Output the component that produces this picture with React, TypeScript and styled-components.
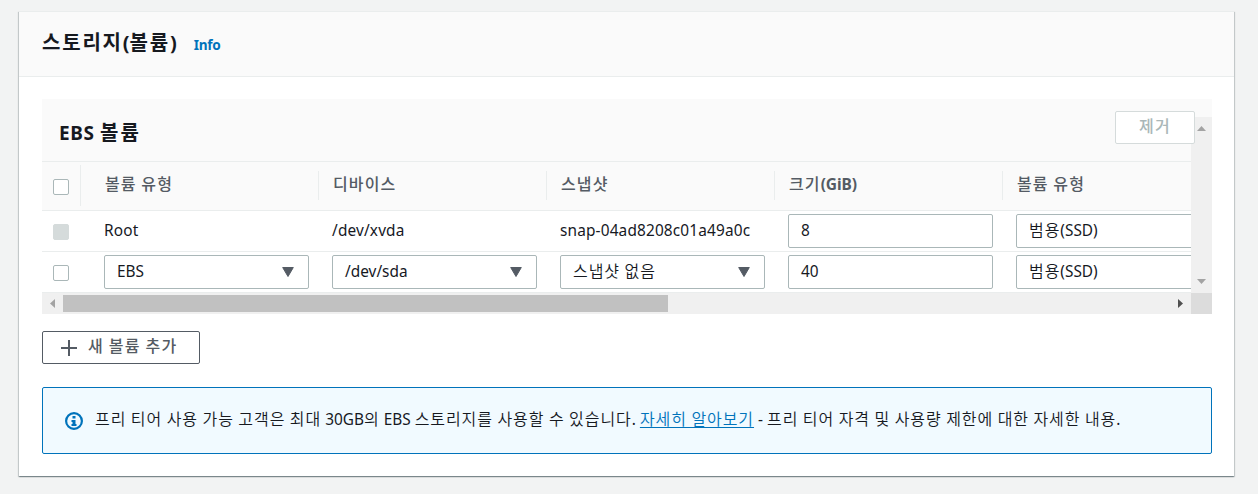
import React from 'react';
import styled, { createGlobalStyle } from 'styled-components';

const Global = createGlobalStyle`
  * { box-sizing: border-box; }
  body {
    margin: 0;
    background: #f2f3f3;
    color: #16191f;
    font-family: "Noto Sans", "Noto Sans CJK KR", sans-serif;
    font-size: 15.4px;
    line-height: 22px;
    overflow: hidden;
  }
`;

const Page = styled.main`
  height: 494px;
  padding: 11px 24px 18px 19px;
`;

const Card = styled.section`
  height: 465px;
  background: #fff;
  box-shadow: 0 1px 1px 0 rgba(0, 28, 36, 0.3), 1px 1px 1px 0 rgba(0, 28, 36, 0.15),
    -1px 1px 1px 0 rgba(0, 28, 36, 0.15);
`;

const CardHeader = styled.header`
  display: flex;
  height: 66px;
  padding: 20px 23px 0;
  gap: 17px;
  background: #fafafa;
  border-bottom: 1px solid #eaeded;
  border-top: 1px solid #eaeded;
`;

const Txt = styled.span`
  white-space: nowrap;
`;

const Hangul = styled.span<{ $size?: number; $spacing?: number; $weight?: number }>`
  font-family: "Noto Sans CJK KR", sans-serif;
  font-size: ${(p) => p.$size ?? 16}px;
  font-weight: ${(p) => p.$weight ?? 350};
  letter-spacing: ${(p) => p.$spacing ?? 0.94}px;
  line-height: 1;
`;

const CardTitle = styled.h2`
  margin: 0;
  font-size: 20px;
  font-weight: 700;
`;

const InfoLink = styled.a`
  padding-top: 2px;
  color: #0073bb;
  font-size: 13.6px;
  font-weight: 700;
  letter-spacing: -0.3px;
`;

const CardBody = styled.div`
  padding: 22px 22px 22px 23px;
`;

const Panel = styled.div`
  display: grid;
  grid-template-columns: 1fr 21px;
  grid-template-rows: 18px 44px 132px 21px;
  background: #fafafa;
`;

const PanelHeader = styled.div`
  grid-area: 1 / 1 / 3 / 3;
  z-index: 1;
  display: flex;
  justify-content: space-between;
  padding: 12px 17px 0;
`;

const PanelTitle = styled.h3`
  margin: 11px 0 0;
  font-size: 19px;
  font-weight: 700;
  letter-spacing: 0.6px;
`;

const Button = styled.button<{ $disabled?: boolean }>`
  display: flex;
  align-items: center;
  justify-content: ${(p) => (p.$disabled ? 'center' : 'flex-start')};
  gap: 11px;
  width: ${(p) => (p.$disabled ? 80 : 158)}px;
  height: 33px;
  padding: 0 0 3px ${(p) => (p.$disabled ? 0 : 18)}px;
  background: #fff;
  border: 1px solid ${(p) => (p.$disabled ? '#d5dbdb' : '#545b64')};
  border-radius: 2px;
  color: ${(p) => (p.$disabled ? '#aab7b8' : '#545b64')};
  font: 700 16px/22px "Noto Sans", "Noto Sans CJK KR", sans-serif;
`;

const PlusIcon = styled.svg`
  margin-top: 4px;
`;

const Table = styled.div`
  grid-area: 3 / 1;
  border-top: 1px solid #eaeded;
  overflow: hidden;
`;

const Row = styled.div<{ $head?: boolean }>`
  display: flex;
  width: max-content;
  height: ${(p) => (p.$head ? 49 : 41)}px;
  background: ${(p) => (p.$head ? '#fafafa' : '#fff')};
  border-bottom: 1px solid #eaeded;
`;

const CheckCell = styled.div<{ $head?: boolean }>`
  flex: none;
  width: 39px;
  height: ${(p) => (p.$head ? 41 : 40)}px;
  margin-top: ${(p) => (p.$head ? 3 : 0)}px;
  padding: ${(p) => (p.$head ? 14 : 13)}px 0 0 11px;
  border-right: 1px solid ${(p) => (p.$head ? '#eaeded' : 'transparent')};
`;

const CheckBox = styled.div<{ $disabled?: boolean }>`
  width: 16px;
  height: 16px;
  border: 1px solid ${(p) => (p.$disabled ? '#d5dbdb' : '#aab7b8')};
  border-radius: 2px;
  background: ${(p) => (p.$disabled ? '#d5dbdb' : '#fff')};
`;

const HeadCell = styled.div<{ $first?: boolean }>`
  width: ${(p) => (p.$first ? 238 : 228)}px;
  height: 29px;
  margin-top: 9px;
  padding: 2px 0 0 ${(p) => (p.$first ? 24 : 14)}px;
  border-right: 1px solid #eaeded;
  color: #545b64;
  font-size: 15.5px;
  font-weight: 700;
  letter-spacing: -0.1px;
`;

const Cell = styled.div<{ $first?: boolean }>`
  width: ${(p) => (p.$first ? 238 : 228)}px;
  padding: 3px 10px 0 ${(p) => (p.$first ? 23 : 13)}px;
`;

const Plain = styled.div`
  padding-top: 6px;
  letter-spacing: 0.15px;
`;

const Field = styled.div`
  display: flex;
  justify-content: space-between;
  height: 34px;
  padding: 5px 14px 0 12px;
  background: #fff;
  border: 1px solid #aab7b8;
  border-radius: 2px;
`;

const Caret = styled.svg`
  width: 12px;
  height: 10px;
  margin-top: 6px;
  fill: #545b64;
`;

const VScroll = styled.div`
  grid-area: 2 / 2 / 4 / 3;
  display: flex;
  flex-direction: column;
  justify-content: space-between;
  align-items: center;
  padding: 9px 0;
  background: #f0f0f0;
`;

const HScroll = styled.div`
  grid-area: 4 / 1;
  display: flex;
  align-items: center;
  padding: 0 8px;
  background: #f0f0f0;
`;

const Thumb = styled.div`
  width: 605px;
  height: 17px;
  margin: 0 auto 0 8px;
  background: #c1c1c1;
`;

const Corner = styled.div`
  grid-area: 4 / 2;
  background: #dcdcdc;
`;

const Arrow = styled.svg`
  display: block;
  flex: none;
`;

const AddRow = styled.div`
  padding: 17px 0 23px;
`;

const Alert = styled.div`
  display: flex;
  height: 67px;
  padding: 21px 22px;
  background: #f1faff;
  border: 1px solid #0073bb;
  border-radius: 2px;
`;

const InfoIcon = styled.svg`
  flex: none;
  width: 18px;
  height: 18px;
  margin: 3px 12px 0 0;
`;

const Link = styled.a`
  color: #0073bb;
  text-decoration: underline;
  text-decoration-thickness: 1px;
  text-underline-offset: 2px;
`;

type LabelProps = { text: string; size?: number; spacing?: number; weight?: number };

/* Hangul runs are set slightly larger and looser than the Latin text beside them. */
function Label({ text, size, spacing, weight }: LabelProps) {
  const runs = text.split(/([가-힣]+(?: +[가-힣]+)*)/);
  return (
    <Txt>
      {runs.map((run, i) =>
        i % 2 ? (
          <Hangul key={i} $size={size} $spacing={spacing} $weight={weight}>{run}</Hangul>
        ) : (
          run
        ),
      )}
    </Txt>
  );
}

function Select({ value }: { value: string }) {
  return (
    <Field>
      <Label text={value} />
      <Caret viewBox="0 0 12 10"><path d="M0.7 0.5h10.6L6 9.5z" stroke="#545b64" strokeLinejoin="round" /></Caret>
    </Field>
  );
}

const headings = ['볼륨 유형', '디바이스', '스냅샷', '크기(GiB)', '볼륨 유형'];

export default function App() {
  return (
    <Page>
      <Global />
      <Card>
        <CardHeader>
          <CardTitle><Label text="스토리지(볼륨)" size={20} spacing={1.8} weight={700} /></CardTitle>
          <InfoLink>Info</InfoLink>
        </CardHeader>
        <CardBody>
          <Panel>
            <PanelHeader>
              <PanelTitle><Label text="EBS 볼륨" size={20} spacing={2} weight={700} /></PanelTitle>
              <Button $disabled><Label text="제거" spacing={1.4} weight={500} /></Button>
            </PanelHeader>
            <Table>
              <Row $head>
                <CheckCell $head><CheckBox /></CheckCell>
                {headings.map((h, i) => (
                  <HeadCell key={i} $first={i === 0}><Label text={h} spacing={1.1} weight={500} /></HeadCell>
                ))}
              </Row>
              <Row>
                <CheckCell><CheckBox $disabled /></CheckCell>
                <Cell $first><Plain><Txt>Root</Txt></Plain></Cell>
                <Cell><Plain><Txt>/dev/xvda</Txt></Plain></Cell>
                <Cell><Plain><Txt>snap-04ad8208c01a49a0c</Txt></Plain></Cell>
                <Cell><Field><Txt>8</Txt></Field></Cell>
                <Cell><Field><Label text="범용(SSD)" /></Field></Cell>
              </Row>
              <Row>
                <CheckCell><CheckBox /></CheckCell>
                <Cell $first><Select value="EBS" /></Cell>
                <Cell><Select value="/dev/sda" /></Cell>
                <Cell><Select value="스냅샷 없음" /></Cell>
                <Cell><Field><Txt>40</Txt></Field></Cell>
                <Cell><Field><Label text="범용(SSD)" /></Field></Cell>
              </Row>
            </Table>
            <VScroll>
              <Arrow width="9" height="5"><path d="M0 5L4.5 0L9 5z" fill="#a3a3a3" /></Arrow>
              <Arrow width="9" height="5"><path d="M0 0L4.5 5L9 0z" fill="#a3a3a3" /></Arrow>
            </VScroll>
            <HScroll>
              <Arrow width="5" height="9"><path d="M5 0L0 4.5L5 9z" fill="#a3a3a3" /></Arrow>
              <Thumb />
              <Arrow width="5" height="9"><path d="M0 0L5 4.5L0 9z" fill="#505050" /></Arrow>
            </HScroll>
            <Corner />
          </Panel>
          <AddRow>
            <Button>
              <PlusIcon width="16" height="16"><path d="M8 0v16M0 8h16" stroke="#545b64" strokeWidth="2" /></PlusIcon>
              <Label text="새 볼륨 추가" spacing={1.25} weight={500} />
            </Button>
          </AddRow>
          <Alert>
            <InfoIcon viewBox="0 0 18 18">
              <circle cx="9" cy="9" r="7.900" fill="none" stroke="#0073bb" strokeWidth="2.200" />
              <path d="M7.500 4h3v2.500h-3zM6.500 8h4v4h1v2h-5v-2h1v-2h-1z" fill="#0073bb" />
            </InfoIcon>
            <Txt>
              <Label text="프리 티어 사용 가능 고객은 최대 30GB의 EBS 스토리지를 사용할 수 있습니다. " />
              <Link><Label text="자세히 알아보기" /></Link>
              <Label text=" - 프리 티어 자격 및 사용량 제한에 대한 자세한 내용." />
            </Txt>
          </Alert>
        </CardBody>
      </Card>
    </Page>
  );
}
